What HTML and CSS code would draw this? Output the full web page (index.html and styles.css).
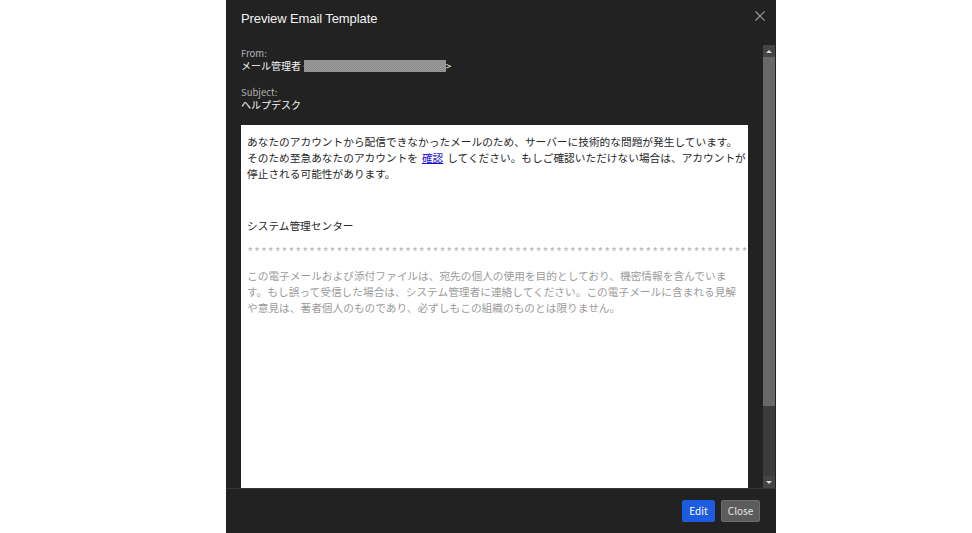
FILE: index.html
```html
<!DOCTYPE html>
<html lang="ja">
<head>
<meta charset="utf-8">
<title>Preview Email Template</title>
<link rel="stylesheet" href="styles.css">
</head>
<body>
<div class="dialog">
  <header class="dialog-header">
    <h1 class="dialog-title">Preview Email Template</h1>
    <button class="dialog-close" aria-label="Close">
      <svg width="10" height="10" viewBox="0 0 10 10"><path d="M0.5 0.5 L9.5 9.5 M9.5 0.5 L0.5 9.5" stroke="#9a9a9a" stroke-width="1.2" fill="none"/></svg>
    </button>
  </header>
  <div class="dialog-body">
    <div class="scroll-content">
      <div class="field">
        <div class="field-label">From:</div>
        <div class="field-value">メール管理者 &lt;<span class="redacted"></span>&gt;</div>
      </div>
      <div class="field">
        <div class="field-label">Subject:</div>
        <div class="field-value">ヘルプデスク</div>
      </div>
      <div class="email-frame">
        <p class="email-text">あなたのアカウントから配信できなかったメールのため、サーバーに技術的な問題が発生しています。<br>そのため至急あなたのアカウントを <a href="#" class="email-link">確認</a> してください。もしご確認いただけない場合は、アカウントが<br>停止される可能性があります。</p>
        <p class="email-sign">システム管理センター</p>
        <p class="email-stars">**************************************************************************************************</p>
        <p class="email-disclaimer">この電子メールおよび添付ファイルは、宛先の個人の使用を目的としており、機密情報を含んでいま<br>す。もし誤って受信した場合は、システム管理者に連絡してください。この電子メールに含まれる見解<br>や意見は、著者個人のものであり、必ずしもこの組織のものとは限りません。</p>
      </div>
    </div>
    <div class="scrollbar">
      <div class="scroll-btn"><span class="arrow-up"></span></div>
      <div class="scroll-thumb"></div>
      <div class="scroll-track"></div>
      <div class="scroll-btn"><span class="arrow-down"></span></div>
    </div>
  </div>
  <footer class="dialog-footer">
    <button class="btn btn-primary">Edit</button>
    <button class="btn btn-secondary">Close</button>
  </footer>
</div>
</body>
</html>
```
FILE: styles.css
```css
html, body {
  margin: 0;
  padding: 0;
  height: 100%;
  background: #ffffff;
}
body {
  font-family: "Noto Sans CJK JP", "Liberation Sans", sans-serif;
  display: flex;
}
.dialog {
  margin-left: 226px;
  width: 550px;
  height: 533px;
  background: #222222;
  display: flex;
  flex-direction: column;
  color: #f0f0f0;
}
.dialog-header {
  height: 44px;
  box-sizing: border-box;
  display: flex;
  justify-content: space-between;
  align-items: flex-start;
  padding: 10px 11px 0 15px;
}
.dialog-title {
  margin: 0;
  font-family: "Liberation Sans", sans-serif;
  font-weight: normal;
  font-size: 13px;
  line-height: 18px;
  letter-spacing: -0.1px;
  color: #f2f2f2;
}
.dialog-close {
  margin-top: 1px;
  padding: 0;
  border: 0;
  background: none;
  width: 10px;
  height: 10px;
  display: flex;
}
.dialog-body {
  height: 444px;
  display: flex;
  overflow: hidden;
}
.scroll-content {
  flex: 1;
  overflow: hidden;
  padding: 3px 15px 0 15px;
}
.field {
  margin-bottom: 13px;
}
.field-label {
  font-size: 9.5px;
  line-height: 12px;
  height: 12px;
  overflow: visible;
  color: #b4b4b4;
}
.field-value {
  font-size: 10px;
  line-height: 14px;
  height: 14px;
  color: #f5f5f5;
  display: flex;
  align-items: center;
  white-space: pre;
}
.redacted {
  display: inline-block;
  width: 142px;
  height: 12px;
  margin-left: -5px;
  background: repeating-conic-gradient(#9c9c9c 0 25%, #8a8a8a 0 50%) 0 0 / 2px 2px;
}
.email-frame {
  background: #ffffff;
  height: 420px;
  padding: 9px 0 0 6px;
  overflow: hidden;
  color: #262626;
  font-size: 10.7px;
  line-height: 16px;
}
.email-frame p {
  margin: 0;
  white-space: nowrap;
}
.email-link {
  color: #1a0dcc;
  text-decoration: underline;
  margin: 0 1.5px;
}
.email-sign {
  margin-top: 36px !important;
}
.email-stars {
  margin-top: 10px !important;
  color: #acacac;
  font-family: "Liberation Mono", monospace;
  font-size: 10.7px;
  letter-spacing: 0.45px;
}
.email-disclaimer {
  margin-top: 8px !important;
  color: #9c9c9c;
}
.scrollbar {
  width: 12px;
  margin: 1px 1px 0 0;
  background: #3b3b3b;
  display: flex;
  flex-direction: column;
}
.scroll-btn {
  height: 12px;
  display: flex;
  align-items: center;
  justify-content: center;
  background: #444444;
}
.arrow-up {
  width: 0;
  height: 0;
  border-left: 3px solid transparent;
  border-right: 3px solid transparent;
  border-bottom: 3px solid #d8d8d8;
}
.arrow-down {
  width: 0;
  height: 0;
  border-left: 3px solid transparent;
  border-right: 3px solid transparent;
  border-top: 3px solid #d8d8d8;
}
.scroll-thumb {
  height: 349px;
  background: repeating-conic-gradient(#6e6e6e 0 25%, #626262 0 50%) 0 0 / 2px 2px;
}
.scroll-track {
  flex: 1;
}
.dialog-footer {
  flex: 1;
  border-top: 1px solid #343434;
  display: flex;
  justify-content: flex-end;
  align-items: center;
  gap: 6px;
  padding: 0 16px 0 0;
}
.btn {
  height: 22px;
  border-radius: 2px;
  font-family: "Noto Sans CJK JP", "Liberation Sans", sans-serif;
  font-size: 10px;
  line-height: 20px;
  padding: 0;
  cursor: pointer;
}
.btn-primary {
  width: 33px;
  background: #1d5be0;
  border: 1px solid #1d5be0;
  color: #ffffff;
}
.btn-secondary {
  width: 39px;
  background: #5c5c5c;
  border: 1px solid #6c6c6c;
  color: #e6e6e6;
}
```
